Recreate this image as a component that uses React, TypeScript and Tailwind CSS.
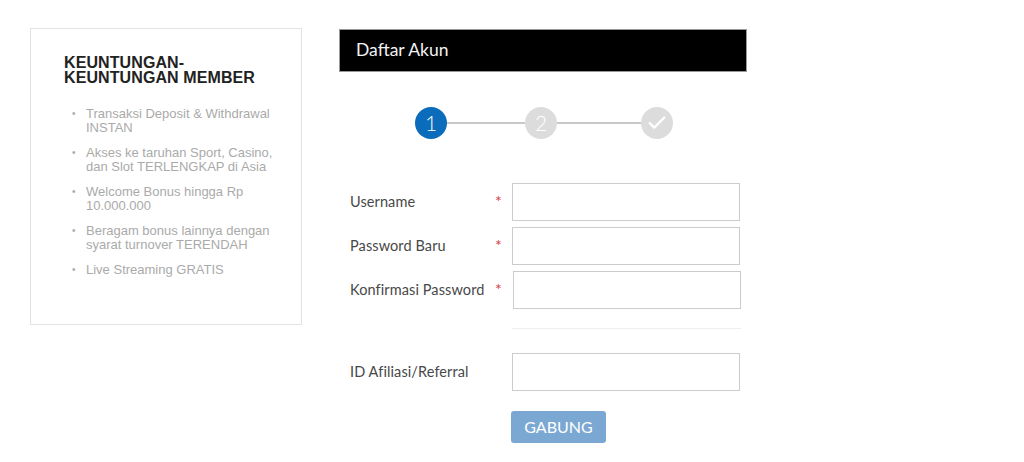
import { Check } from "lucide-react";

const benefits = [
  "Transaksi Deposit & Withdrawal INSTAN",
  "Akses ke taruhan Sport, Casino, dan Slot TERLENGKAP di Asia",
  "Welcome Bonus hingga Rp 10.000.000",
  "Beragam bonus lainnya dengan syarat turnover TERENDAH",
  "Live Streaming GRATIS",
];

function Field({ label, required = true, shift = 0 }: { label: string; required?: boolean; shift?: number }) {
  return (
    <div className="flex h-[38px] items-center">
      <label className="w-[156px] pl-[11px] text-[14.5px] tracking-[0.1px] text-[#484848]">{label}</label>
      <span className="-mt-[3px] w-[17px] text-[16px] text-[#d9363e]">{required ? "*" : ""}</span>
      <input
        className="h-[38px] w-[228px] border border-[#ccc] bg-white outline-none"
        style={{ marginLeft: shift }}
      />
    </div>
  );
}

export default function App() {
  return (
    <div className="flex h-[462px] w-[1024px] bg-white pl-[30px] pt-[28px] font-['Lato',sans-serif]">
      <div className="h-[297px] w-[272px] border border-[#e2e2e2] pl-[33px] pr-[20px] pt-[26px] font-['Liberation_Sans',Arial,sans-serif]">
        <h2 className="text-[16px] font-bold leading-[15px] tracking-[0.1px] text-[#222]">
          KEUNTUNGAN-
          <br />
          KEUNTUNGAN MEMBER
        </h2>
        <ul className="mt-[22px] space-y-[11px] pl-[8px]">
          {benefits.map((b) => (
            <li key={b} className="flex text-[13px] leading-[14px] text-[#aaa]">
              <span className="w-[14px] shrink-0 text-[10px]">•</span>
              <span>{b}</span>
            </li>
          ))}
        </ul>
      </div>

      <div className="ml-[37px] w-[408px]">
        <div className="mt-px flex h-[43px] items-center border border-[#999] bg-black pl-[16px] text-[17.5px] text-[#f2f2f2]">
          Daftar Akun
        </div>

        <div className="mt-[35px] flex items-center pl-[76px]">
          <div className="flex h-[32px] w-[32px] items-center justify-center rounded-full bg-[#0b6cbc] text-[21px] font-light text-white">
            1
          </div>
          <div className="h-[2px] w-[78px] bg-[#c8c8c8]" />
          <div className="flex h-[32px] w-[32px] items-center justify-center rounded-full bg-[#dcdcdc] text-[21px] font-light text-white">
            2
          </div>
          <div className="h-[2px] w-[84px] bg-[#c8c8c8]" />
          <div className="flex h-[32px] w-[32px] items-center justify-center rounded-full bg-[#dcdcdc] text-white">
            <Check size={22} strokeWidth={2.5} />
          </div>
        </div>

        <div className="mt-[44px] flex flex-col gap-[6px]">
          <Field label="Username" />
          <Field label="Password Baru" />
          <Field label="Konfirmasi Password" shift={1} />
        </div>

        <div className="ml-[173px] mt-[19px] h-px w-[229px] bg-[#eee]" />

        <div className="mt-[24px]">
          <Field label="ID Afiliasi/Referral" required={false} />
        </div>

        <button className="ml-[172px] mt-[20px] h-[32px] w-[95px] rounded-[3px] bg-[#7ba8d3] text-[16px] text-white">
          GABUNG
        </button>
      </div>
    </div>
  );
}
